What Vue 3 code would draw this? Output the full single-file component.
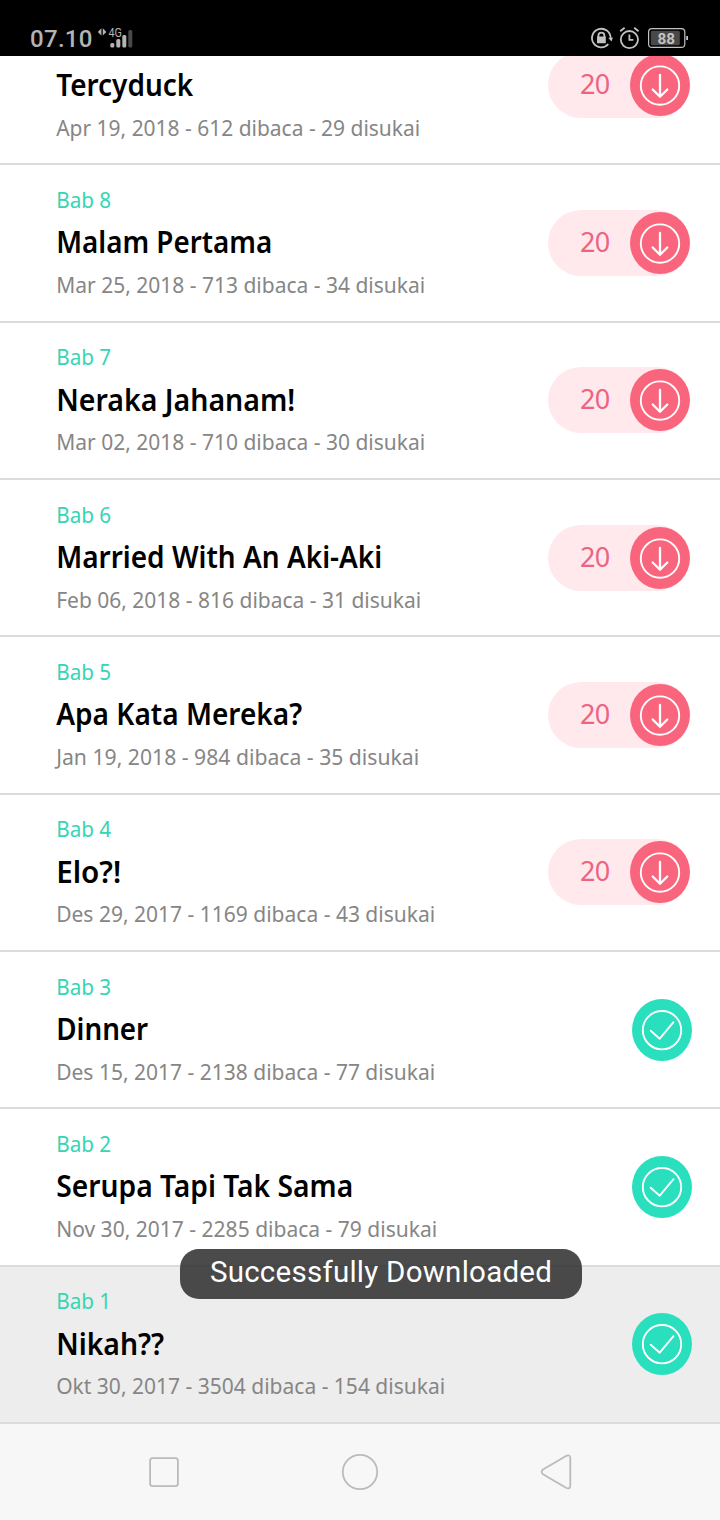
<script setup>
const chapters = [
  { title: 'Tercyduck', meta: 'Apr 19, 2018 - 612 dibaca - 29 disukai', tw: 137, mw: 364 },
  { bab: 'Bab 8', title: 'Malam Pertama', meta: 'Mar 25, 2018 - 713 dibaca - 34 disukai', tw: 216, mw: 369 },
  { bab: 'Bab 7', title: 'Neraka Jahanam!', meta: 'Mar 02, 2018 - 710 dibaca - 30 disukai', tw: 239, mw: 369 },
  { bab: 'Bab 6', title: 'Married With An Aki-Aki', meta: 'Feb 06, 2018 - 816 dibaca - 31 disukai', tw: 326, mw: 365 },
  { bab: 'Bab 5', title: 'Apa Kata Mereka?', meta: 'Jan 19, 2018 - 984 dibaca - 35 disukai', tw: 246, mw: 363 },
  { bab: 'Bab 4', title: 'Elo?!', meta: 'Des 29, 2017 - 1169 dibaca - 43 disukai', tw: 65, mw: 379 },
  { bab: 'Bab 3', title: 'Dinner', meta: 'Des 15, 2017 - 2138 dibaca - 77 disukai', tw: 92, mw: 379, done: true },
  { bab: 'Bab 2', title: 'Serupa Tapi Tak Sama', meta: 'Nov 30, 2017 - 2285 dibaca - 79 disukai', tw: 297, mw: 381, done: true },
  { bab: 'Bab 1', title: 'Nikah??', meta: 'Okt 30, 2017 - 3504 dibaca - 154 disukai', tw: 108, mw: 389, done: true, active: true },
]
</script>

<template>
  <div class="screen">
    <header class="status">
      <span class="time">07.10</span>
      <svg class="signal" width="40" height="26" viewBox="0 0 40 26">
        <path d="M4.4 2.2v7.4L.8 6zM5.8 2.2v7.4L9.4 6z" fill="#b4b4b4" />
        <text x="11.5" y="11" class="net" textLength="13.5" lengthAdjust="spacingAndGlyphs">4G</text>
        <rect x="13.3" y="17" width="4" height="4.6" rx="1.5" fill="#b4b4b4" />
        <rect x="19.3" y="13" width="4" height="8.6" rx="1.5" fill="#b4b4b4" />
        <rect x="25.3" y="9" width="4" height="12.6" rx="1.5" fill="#b4b4b4" />
        <rect x="31.3" y="4" width="4" height="17.6" rx="1.5" fill="#494949" />
      </svg>
      <div class="indicators">
        <svg width="100" height="26" viewBox="0 0 100 26">
          <g fill="none" stroke="#c2c2c2" stroke-width="1.8">
            <path d="M19.3 18.2A9.3 9.3 0 1 1 21.6 12" />
            <path d="M9.4 11.5v-1.8a3 3 0 0 1 6 0v1.8" />
            <circle cx="40.4" cy="13.6" r="8.6" />
            <path d="M40.4 8.6v5.3h4M31.2 5.2l4.4-3.5M45.2 1.7l4.4 3.5" />
            <rect x="59.6" y="2.6" width="36.2" height="18.8" rx="3.5" stroke-width="1.2" />
          </g>
          <path d="M8 10.6h8.8v6.6H8zM19.3 12l4.6-.6-1.4 4.2z" fill="#c2c2c2" />
          <rect x="61.8" y="4.8" width="29" height="14.4" rx="1.5" fill="#494949" />
          <rect x="97.2" y="10" width="1.8" height="4" fill="#c2c2c2" />
          <text x="68.4" y="17.6" class="battery" textLength="17.5" lengthAdjust="spacingAndGlyphs">88</text>
        </svg>
      </div>
    </header>

    <main class="viewport">
      <div class="list">
        <article v-for="c in chapters" :key="c.title" class="row" :class="{ active: c.active }">
          <svg class="info" width="460" height="150" viewBox="0 0 460 150">
            <text v-if="c.bab" x="0.2" y="43" class="bab" textLength="55" lengthAdjust="spacingAndGlyphs">{{ c.bab }}</text>
            <text x="0.2" y="88" class="title" :textLength="c.tw" lengthAdjust="spacingAndGlyphs">{{ c.title }}</text>
            <text x="0.2" y="128" class="meta" :textLength="c.mw" lengthAdjust="spacingAndGlyphs">{{ c.meta }}</text>
          </svg>
          <div v-if="c.done" class="done">
            <svg width="60" height="62" viewBox="0 0 60 62">
              <circle cx="30" cy="31.2" r="19.2" />
              <path d="M18.7 31.7l9 8 13.8-16.5" />
            </svg>
          </div>
          <div v-else class="pill">
            <span class="cost">20</span>
            <div class="get">
              <svg width="60" height="62" viewBox="0 0 60 62">
                <circle cx="30" cy="31.6" r="19.2" />
                <path class="arrow" d="M30 21v21.5M22.7 35.5l7.3 7.2 7.3-7.2" />
              </svg>
            </div>
          </div>
        </article>
      </div>
    </main>

    <nav class="nav">
      <svg width="720" height="96" viewBox="0 0 720 96">
        <g fill="none" stroke="#bbb" stroke-width="1.8" stroke-linejoin="round">
          <rect x="150.1" y="34.2" width="27.8" height="28" rx="2.6" />
          <circle cx="360" cy="48" r="17.2" />
          <path d="M543 45.5L566 31.9Q570.2 30 570.3 34V61.5Q570.2 65.6 566 63.7L543 50.3Q540.2 47.8 543 45.5Z" />
        </g>
      </svg>
    </nav>

    <div class="toast">Successfully Downloaded</div>
  </div>
</template>

<style>
body { margin: 0; background: #fff; }
</style>

<style scoped>
.screen {
  position: relative;
  display: flex;
  flex-direction: column;
  width: 720px;
  height: 1520px;
  overflow: hidden;
  background: #fff;
  font-family: "Noto Sans", "Open Sans", sans-serif;
}
.status {
  display: flex;
  flex: none;
  box-sizing: border-box;
  height: 56px;
  padding: 26px 31px 0 30px;
  background: #000;
}
.time {
  width: 66px;
  color: #b4b4b4;
  font: 500 24px/26px Roboto, sans-serif;
  letter-spacing: 0.3px;
  white-space: nowrap;
}
.signal { margin-left: 1px; }
.net { font: 12px Roboto, sans-serif; fill: #b4b4b4; }
.indicators { margin-left: auto; }
.battery { font: 700 15.5px Roboto, sans-serif; fill: #c2c2c2; }
.viewport {
  display: flex;
  flex: none;
  flex-direction: column;
  justify-content: flex-end;
  height: 1368px;
  overflow: hidden;
}
.list { flex: none; }
.row {
  display: flex;
  align-items: flex-start;
  justify-content: space-between;
  box-sizing: border-box;
  height: 157.35px;
  padding: 0 28px 0 56px;
  border-bottom: 2px solid #dcdcdc;
}
.row.active { background: #ededed; }
.info { flex: none; overflow: visible; }
.bab { font-size: 22px; fill: #35d5b5; }
.title { font-size: 30px; font-weight: 600; fill: #000; }
.meta { font-size: 22px; font-weight: 400; fill: #868686; }
.row:nth-child(3n) .bab,
.row:nth-child(3n) .meta { transform: translateY(-1px); }
.pill {
  display: flex;
  align-items: center;
  box-sizing: border-box;
  width: 142px;
  height: 66px;
  margin: 44.6px 2px 0 0;
  padding-left: 32px;
  border-radius: 33px;
  background: #ffe9ec;
}
.cost {
  width: 50px;
  margin-top: -2px;
  color: #ec6482;
  font-size: 27px;
  line-height: 38px;
  letter-spacing: -0.7px;
}
.get, .done {
  flex: none;
  width: 60px;
  height: 62px;
  border-radius: 30px / 31px;
}
.get { background: #fa657e; }
.done { margin-top: 46.6px; background: #29dfbe; }
.get svg, .done svg {
  display: block;
  fill: none;
  stroke: #fff;
  stroke-width: 1.9;
  stroke-linecap: round;
  stroke-linejoin: round;
}
.get .arrow { stroke-width: 2.3; }
.row:first-child .pill { margin-top: 44px; }
.nav { flex: none; height: 96px; background: #f7f7f7; }
.nav svg { display: block; }
.toast {
  position: absolute;
  top: 1249px;
  left: 180px;
  box-sizing: border-box;
  width: 402px;
  height: 50px;
  border-radius: 19px;
  background: rgba(45, 45, 45, 0.86);
  color: #fff;
  font: 400 29.5px/46px Roboto, sans-serif;
  letter-spacing: 0.25px;
  text-align: center;
  white-space: nowrap;
}
</style>
